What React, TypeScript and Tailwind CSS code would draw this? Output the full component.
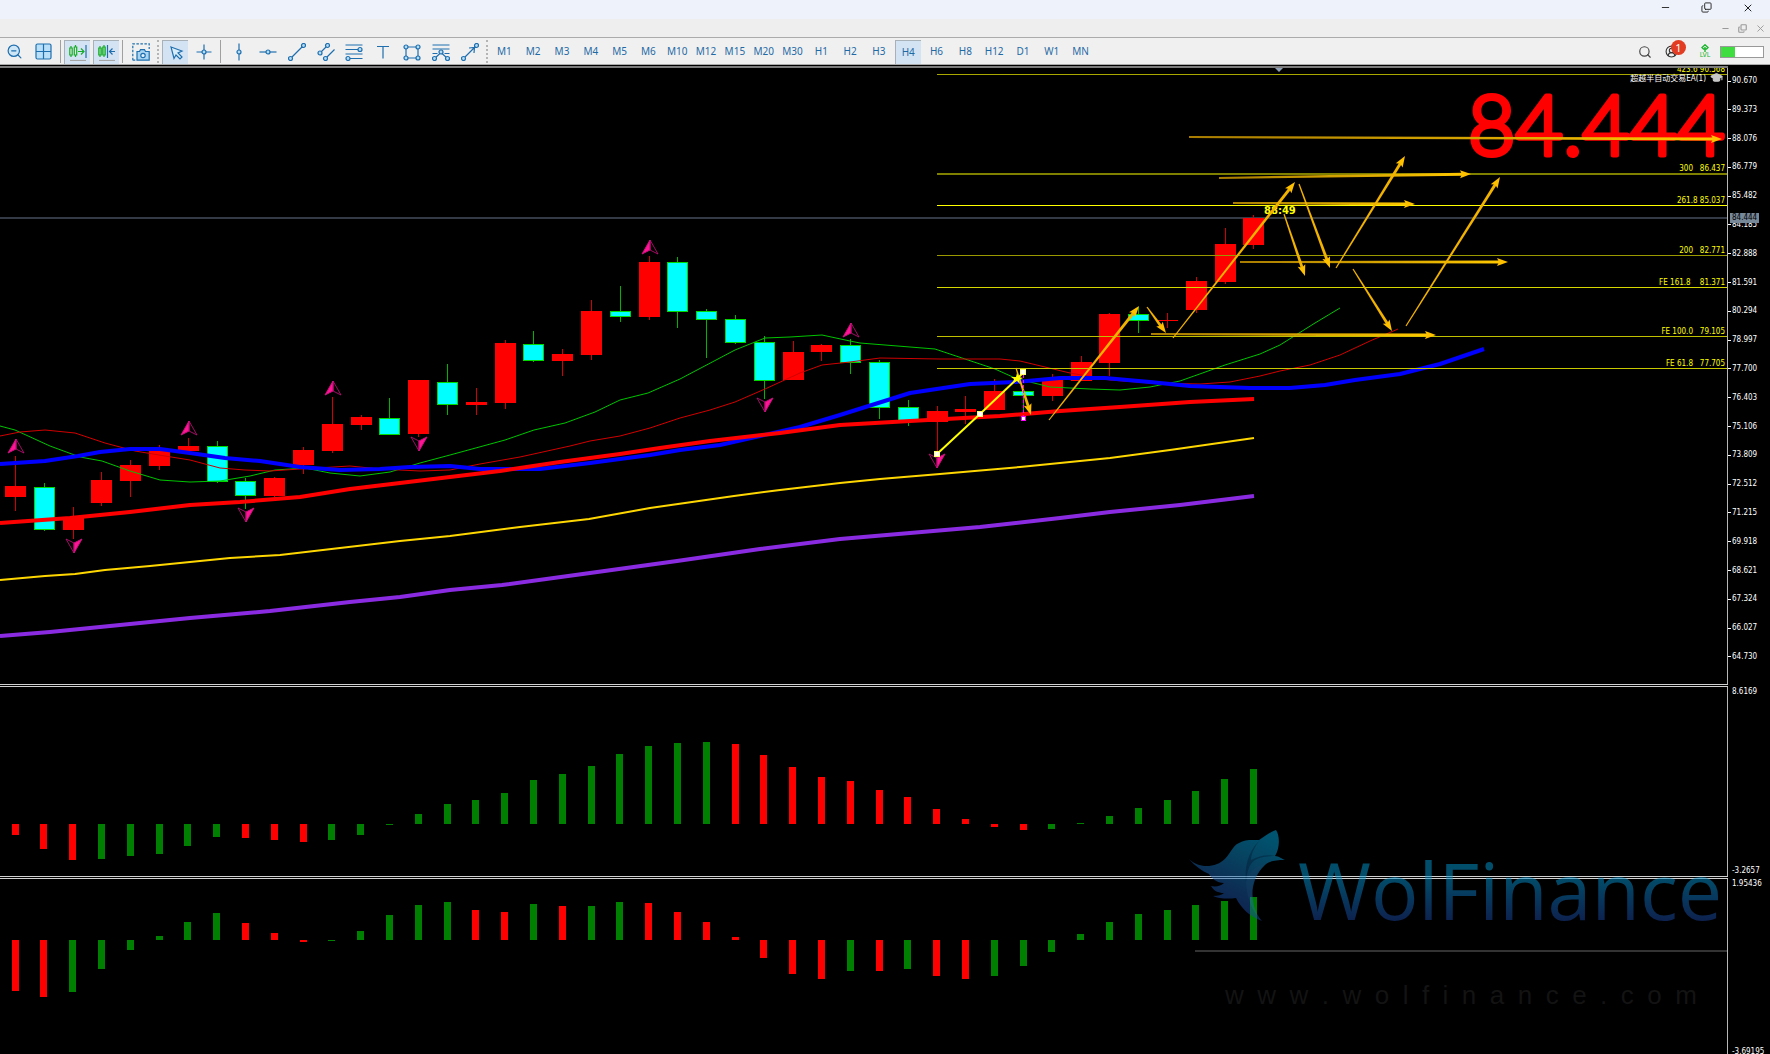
import React from 'react'
import { ZoomOut, Search, Minus, X, Copy, CircleUserRound, GraduationCap } from 'lucide-react'

type Tone = 'r' | 'g';
// [tone, body top, body bottom, wick top, wick bottom]
type Candle = [Tone, number, number, number, number];
type Point = [number, number];

const STEP = 28.8;
const FIRST = 15.5;
const barX = (i: number) => FIRST + i * STEP;

const candles: Candle[] = [
  ['r', 486, 497, 456, 511],
  ['g', 487, 529, 483, 531],
  ['r', 517, 530, 507, 539],
  ['r', 480, 503, 472, 506],
  ['r', 465, 481, 460, 497],
  ['r', 450, 466, 445, 470],
  ['r', 446, 451, 438, 451],
  ['g', 446, 481, 441, 483],
  ['g', 481, 495, 478, 509],
  ['r', 478, 496, 477, 497],
  ['r', 450, 465, 447, 474],
  ['r', 424, 451, 397, 453],
  ['r', 417, 425, 415, 430],
  ['g', 418, 434, 398, 435],
  ['r', 380, 434, 380, 437],
  ['g', 382, 404, 364, 415],
  ['r', 402, 405, 388, 415],
  ['r', 343, 403, 340, 409],
  ['g', 344, 360, 331, 362],
  ['r', 354, 361, 349, 376],
  ['r', 311, 355, 300, 360],
  ['g', 311, 316, 286, 322],
  ['r', 262, 317, 256, 320],
  ['g', 262, 311, 257, 328],
  ['g', 311, 319, 309, 358],
  ['g', 319, 342, 315, 344],
  ['g', 342, 380, 336, 399],
  ['r', 352, 380, 341, 380],
  ['r', 345, 352, 344, 361],
  ['g', 345, 362, 339, 374],
  ['g', 362, 407, 360, 419],
  ['g', 407, 420, 400, 426],
  ['r', 411, 422, 406, 452],
  ['r', 409, 412, 396, 424],
  ['r', 391, 410, 379, 410],
  ['g', 391, 395, 391, 417],
  ['r', 380, 396, 374, 401],
  ['r', 362, 381, 356, 381],
  ['r', 314, 363, 313, 376],
  ['g', 314, 320, 307, 333],
  ['r', 320, 321, 313, 328],
  ['r', 281, 310, 277, 313],
  ['r', 244, 282, 228, 284],
  ['r', 218, 245, 215, 249],
];

const macd: [Tone, number][] = [
  ['r', -11], ['r', -25], ['r', -36], ['g', -35], ['g', -32], ['g', -30], ['g', -22], ['g', -13],
  ['r', -14], ['r', -16], ['r', -18], ['g', -16], ['g', -11], ['g', -1], ['g', 10], ['g', 20],
  ['g', 24], ['g', 31], ['g', 44], ['g', 50], ['g', 58], ['g', 70], ['g', 78], ['g', 81],
  ['g', 82], ['r', 80], ['r', 69], ['r', 57], ['r', 47], ['r', 43], ['r', 34], ['r', 27],
  ['r', 15], ['r', 5], ['r', -3], ['r', -6], ['g', -5], ['g', 1], ['g', 8], ['g', 16],
  ['g', 24], ['g', 33], ['g', 45], ['g', 55],
];

const accel: [Tone, number][] = [
  ['r', -51], ['r', -57], ['g', -52], ['g', -29], ['g', -10], ['g', 4], ['g', 18], ['g', 27],
  ['r', 17], ['r', 7], ['r', -2], ['g', -1], ['g', 9], ['g', 25], ['g', 35], ['g', 38],
  ['r', 30], ['r', 28], ['g', 36], ['r', 34], ['g', 34], ['g', 38], ['r', 37], ['r', 28],
  ['r', 18], ['r', 3], ['r', -18], ['r', -34], ['r', -39], ['g', -31], ['r', -31], ['g', -29],
  ['r', -36], ['r', -39], ['g', -36], ['g', -26], ['g', -12], ['g', 6], ['g', 18], ['g', 26],
  ['g', 30], ['g', 35], ['g', 39], ['g', 43],
];

const averages = [
  {
    color: '#00c400', width: 1,
    points: '0,426 15,430 50,446 80,457 102,461 130,471 160,480 190,482 220,481 250,476 275,470 305,468 330,473 360,476 390,472 420,463 450,455 505,440 534,430 565,423 595,412 620,400 648,393 680,379 735,350 765,338 790,337 822,335 850,341 860,343 935,349 965,359 995,369 1015,378 1030,382 1050,387 1090,389 1120,390 1150,387 1180,381 1225,365 1260,354 1280,345 1315,323 1340,308',
  },
  {
    color: '#d00000', width: 1,
    points: '0,436 20,432 45,430 75,433 105,443 135,451 165,456 190,460 220,468 245,470 270,471 300,469 350,466 380,469 420,471 450,470 480,464 520,457 570,446 590,441 620,436 650,428 680,418 710,410 735,402 765,389 800,373 822,365 850,362 880,358 940,359 1000,359 1020,361 1070,373 1110,380 1150,383 1200,384 1230,382 1260,376 1280,371 1310,365 1340,355 1370,341 1398,329',
  },
  {
    color: '#0000ff', width: 4,
    points: '0,464 45,461 78,456 100,452 130,449 160,449 190,453 225,458 260,461 300,467 340,470 380,469 410,467 450,466 480,469 540,469 590,463 650,455 680,450 720,445 760,436 800,427 840,415 875,404 910,393 970,384 1015,382 1060,378 1105,378 1150,382 1190,386 1250,388 1290,388 1325,385 1355,380 1400,374 1440,364 1484,349',
  },
  {
    color: '#ff0000', width: 4,
    points: '0,523 70,518 130,512 190,505 240,502 300,497 350,489 400,483 450,477 500,471 560,462 620,454 660,448 710,441 780,433 840,425 910,421 1000,416 1060,411 1120,407 1190,402 1254,399',
  },
  {
    color: '#ffd700', width: 2,
    points: '0,580 45,576 75,574 105,570 150,566 230,558 280,555 340,548 400,541 450,536 520,527 589,519 650,508 734,496 780,490 840,483 880,479 940,474 1020,467 1080,461 1110,458 1170,450 1254,438',
  },
  {
    color: '#8a2be2', width: 4,
    points: '0,636 50,632 130,624 190,618 270,611 350,602 400,597 450,590 502,585 590,573 677,561 760,549 840,539 910,533 980,527 1060,518 1110,512 1180,505 1254,496',
  },
];

const fibs = [
  { y: 74, text: '423.6 90.568', color: '#a8a800', h: 1 },
  { y: 173, text: '300   86.437', color: '#808000', h: 2 },
  { y: 205, text: '261.8 85.037', color: '#ffff00', h: 1 },
  { y: 255, text: '200   82.771', color: '#9a9a00', h: 1 },
  { y: 287, text: 'FE 161.8    81.371', color: '#d6d600', h: 1 },
  { y: 336, text: 'FE 100.0   79.105', color: '#c0c000', h: 1 },
  { y: 368, text: 'FE 61.8   77.705', color: '#c8c800', h: 1 },
];

const arrows: [Point, Point][] = [
  [[1189, 137], [1722, 139]],
  [[1219, 178], [1471, 174]],
  [[1233, 203], [1415, 204]],
  [[1240, 262], [1508, 262]],
  [[1151, 334], [1436, 335]],
  [[1173, 338], [1295, 182]],
  [[1299, 184], [1330, 268]],
  [[1284, 214], [1305, 276]],
  [[1336, 268], [1405, 156]],
  [[1353, 269], [1392, 331]],
  [[1406, 326], [1500, 177]],
  [[1049, 420], [1139, 306]],
  [[1147, 307], [1166, 333]],
  [[1016, 368], [1031, 415]],
];

const fractalsUp: Point[] = [[16, 439], [189, 421], [333, 381], [650, 240], [851, 323]];
const fractalsDown: Point[] = [[74, 553], [246, 522], [419, 451], [765, 412], [937, 468]];

const prices = [
  '90.670', '89.373', '88.076', '86.779', '85.482', '84.185', '82.888', '81.591', '80.294', '78.997', '77.700',
  '76.403', '75.106', '73.809', '72.512', '71.215', '69.918', '68.621', '67.324', '66.027', '64.730',
];

const timeframes = [
  'M1', 'M2', 'M3', 'M4', 'M5', 'M6', 'M10', 'M12', 'M15', 'M20', 'M30',
  'H1', 'H2', 'H3', 'H4', 'H6', 'H8', 'H12', 'D1', 'W1', 'MN',
];

const BLUE = '#1f6fae';

const Dot = ({ x, y }: { x: number; y: number }) => (
  <circle cx={x} cy={y} r={2} fill="#b5dcf5" stroke={BLUE} />
);

const Glyph = ({ children }: { children: React.ReactNode }) => (
  <svg className="size-[18px] shrink-0" viewBox="0 0 18 18" fill="none" stroke={BLUE} strokeWidth={1.2}>
    {children}
  </svg>
);

const drawTools = [
  { name: 'Vertical line', icon: <><path d="M9 .5v17" /><Dot x={9} y={9} /></> },
  { name: 'Horizontal line', icon: <><path d="M.5 9h17" /><Dot x={9} y={9} /></> },
  { name: 'Trendline', icon: <><path d="M2.5 15.5l13-13" /><Dot x={2.5} y={15.5} /><Dot x={15.5} y={2.5} /></> },
  {
    name: 'Channel',
    icon: <><path d="M3 10l7.500-7.500M8.500 15.500l9-9" /><Dot x={3} y={10} /><Dot x={10.5} y={2.5} /><Dot x={8.5} y={15.5} /></>,
  },
  {
    name: 'Fibonacci retracement',
    icon: <><path d="M.5 2h17M.5 6.500h13M.5 11h17M4 15.500h13.500" /><Dot x={15} y={6.5} /><Dot x={3} y={15.5} /></>,
  },
  { name: 'Text', icon: <path d="M3 3.500h12M9 3.500v12" /> },
  {
    name: 'Rectangle',
    icon: <><path d="M3 4h12v11H3z" /><Dot x={3} y={4} /><Dot x={15} y={4} /><Dot x={3} y={15} /><Dot x={15} y={15} /></>,
  },
  {
    name: 'Fibonacci expansion',
    icon: (
      <>
        <path d="M.5 2h17M.5 6h17M.5 10.500h5M12.500 10.500h5M2.500 15.500L9 9.500l6.500 6" />
        <Dot x={2.5} y={15.5} /><Dot x={9} y={9} /><Dot x={15.5} y={15.5} />
      </>
    ),
  },
  {
    name: 'Arrow line',
    icon: <><path d="M2.500 15.500l13-13M8 5l5.500-.5L13 10" /><Dot x={2.5} y={15.5} /><Dot x={15.5} y={2.5} /></>,
  },
];

const iconBtn = 'flex h-6 w-[26px] shrink-0 items-center justify-center';
const pressed = 'bg-[#d3e3f3] border-t border-l border-[#a8b0b8]';

const Sep = () => <span className="h-[23px] w-px shrink-0 bg-[#a0a0a0]" />;
const Grip = () => <span className="h-[23px] shrink-0 border-l-2 border-dotted border-[#b4b4b4]" />;

const TitleBars = () => (
  <header>
    <div className="flex h-[19px] items-start justify-end gap-[30px] bg-[#edf2fb] pr-4 pt-[2px] text-[#222]">
      <button aria-label="Minimize"><Minus size={11} strokeWidth={2} /></button>
      <button aria-label="Restore"><Copy className="-scale-x-100 rotate-180" size={11} strokeWidth={2} /></button>
      <button aria-label="Close"><X size={12} strokeWidth={2} /></button>
    </div>
    <div className="flex h-[18px] items-center justify-end gap-2 bg-[#eeeeee] pr-1 text-[#999]">
      <button aria-label="Minimize chart"><Minus size={9} strokeWidth={3} /></button>
      <button aria-label="Restore chart"><Copy className="-scale-x-100 rotate-180" size={9} strokeWidth={3} /></button>
      <button aria-label="Close chart"><X size={11} strokeWidth={2} /></button>
    </div>
  </header>
);

const Toolbar = () => (
  <nav className="flex h-[28px] items-center border-y border-[#ababab] bg-[#f0f0f0] pt-px">
    <button aria-label="Zoom out" className="flex h-6 w-7 shrink-0 items-center justify-center">
      <ZoomOut size={17} color={BLUE} fill="#cfe6f6" strokeWidth={1.7} />
    </button>
    <button aria-label="Tile windows" className="flex h-6 w-8 shrink-0 items-center justify-center">
      <Glyph>
        <rect x={1} y={1} width={15} height={15} rx={1.5} fill="#b9e0f8" />
        <path d="M8.500 1v15M1 8.500h15" />
      </Glyph>
    </button>
    <Sep />
    <button aria-label="Auto scroll" className={`ml-[3px] ${iconBtn} ${pressed}`}>
      <Glyph>
        <g stroke="#19ab2c">
          <path d="M2 3v11M6.500 2v12M9 8.500h6M12 5.500l3 3-3 3" />
          <path d="M.8 5h2.400v7H.8zM5.300 4h2.400v8H5.300z" fill="#d8f5d8" />
        </g>
        <path d="M17 2v13" />
        <path d="M1 17.500h16" stroke="#a5a5a5" />
      </Glyph>
    </button>
    <button aria-label="Chart shift" className={`mx-[3px] ${iconBtn} ${pressed}`}>
      <Glyph>
        <g stroke="#19ab2c">
          <path d="M2 3v11M6 2v12" />
          <path d="M.8 5h2.400v7H.8zM4.800 4h2.400v8H4.800z" fill="#8fe09a" />
        </g>
        <path d="M9.500 2v13M17 8.500h-5M14.500 5.500l-3 3 3 3" />
        <path d="M1 17.500h16" stroke="#a5a5a5" />
      </Glyph>
    </button>
    <Sep />
    <button aria-label="Screenshot" className={`ml-[5px] mr-[3px] ${iconBtn}`}>
      <Glyph>
        <path d="M.8 17.200V.8h16.400V6M.8 17.200H4" strokeDasharray="2.500 1.500" />
        <path d="M5 8.500h2.500l1-1.800h4l1 1.800h3.700v8.700H5z" fill="#a9d5f3" />
        <circle cx={11} cy={12.5} r={2.2} fill="#e6f3fb" />
      </Glyph>
    </button>
    <Grip />
    <button aria-label="Cursor" className={`ml-[3px] ${iconBtn} ${pressed}`}>
      <Glyph><path d="M4 4l11 4-4 2 4 4-2 2-4-4-2 3.500z" fill="#d8ecf9" /></Glyph>
    </button>
    <button aria-label="Crosshair" className={`mx-[3px] ${iconBtn}`}>
      <Glyph><path d="M9 1.500v15M1.500 9h15" /><Dot x={9} y={9} /></Glyph>
    </button>
    <Sep />
    <div className="ml-1 grid w-[259px] shrink-0 grid-cols-9 justify-items-center">
      {drawTools.map((tool) => (
        <button key={tool.name} aria-label={tool.name} className={iconBtn}>
          <Glyph>{tool.icon}</Glyph>
        </button>
      ))}
    </div>
    <span className="w-[2px]" />
    <Grip />
    <div className="ml-[2px] grid w-[605px] shrink-0 grid-cols-[repeat(21,minmax(0,1fr))] justify-items-center font-['Noto_Sans',sans-serif] text-[10px] text-[#1f6aa5]">
      {timeframes.map((tf) => (
        <button key={tf} className={tf === 'H4' ? `${iconBtn} ${pressed}` : iconBtn}>{tf}</button>
      ))}
    </div>
    <div className="ml-auto flex items-center pr-[6px]">
      <button aria-label="Search"><Search size={14} color="#444" strokeWidth={2} /></button>
      <button aria-label="Account" className="relative ml-[13px] mr-4 w-4">
        <CircleUserRound size={13} color="#333" />
        <span className="absolute -top-[5px] left-[6px] flex size-[15px] items-center justify-center rounded-full bg-[#e23c22] text-[11px] leading-none text-white">1</span>
      </button>
      <div className="flex w-4 flex-col items-center text-[#1cb52f]">
        <svg className="size-2" viewBox="0 0 8 8" fill="none" stroke="currentColor" strokeWidth={1.4}>
          <path d="M4 .8l3 2.700-1.500 1.500h-3L1 3.500zM4 3v5" />
        </svg>
        <span className="font-['DejaVu_Sans_Condensed','DejaVu_Sans',sans-serif] text-[7px] leading-[7px]">LVL</span>
      </div>
      <div className="ml-[7px] h-3 w-11 border border-[#999] bg-white">
        <div className="h-full w-[14px] bg-[#3fdd3f]" />
      </div>
    </div>
  </nav>
);

// thin at the tail, thicker toward the head
const Arrow = ({ from, to }: { from: Point; to: Point }) => {
  const [x1, y1] = from;
  const [x2, y2] = to;
  const len = Math.hypot(x2 - x1, y2 - y1);
  const angle = (Math.atan2(y2 - y1, x2 - x1) * 180) / Math.PI;
  const flat = Math.abs(angle) < 2;
  const t = flat ? 1 : 0.6;
  return (
    <g transform={`translate(${x1} ${y1}) rotate(${angle})`}>
      <path d={`M0 ${-t}L${len - 8} -1.500V1.500L0 ${t}z`} fill={flat ? 'url(#shaft)' : '#f2b200'} />
      <path d={`M${len} 0l-11 -4l2 4l-2 4z`} fill="#ffc000" />
    </g>
  );
};

const Histogram = ({ data, zero }: { data: [Tone, number][]; zero: number }) => (
  <g shapeRendering="crispEdges">
    {data.map(([tone, v], i) => (
      <rect
        key={i}
        x={Math.floor(barX(i) - 3.5)}
        y={v > 0 ? zero - v : zero}
        width={7}
        height={Math.abs(v)}
        fill={tone === 'r' ? '#ff0000' : '#008000'}
      />
    ))}
  </g>
);

const PriceChart = () => (
  <svg className="h-[616px] w-full min-w-0" viewBox="0 68 1727 616" preserveAspectRatio="xMaxYMin slice">
    <defs>
      <linearGradient id="shaft" x1="0" x2="1">
        <stop offset="0" stopColor="#a87c00" />
        <stop offset="1" stopColor="#ffc800" />
      </linearGradient>
    </defs>
    <rect x={0} y={217} width={1727} height={2} fill="#343a46" />
    <g shapeRendering="crispEdges">
      {candles.map(([tone, top, bottom, high, low], i) => {
        const x = Math.floor(barX(i) - 10);
        const up = tone === 'r';
        return (
          <g key={i}>
            <rect x={x + 10} y={high} width={1} height={low - high} fill={up ? '#d40000' : '#00b400'} />
            {up ? (
              <rect x={x} y={top} width={21} height={bottom - top} fill="#ff0000" />
            ) : (
              <rect x={x + 0.5} y={top + 0.5} width={20} height={bottom - top} fill="#00ffff" stroke="#00d800" />
            )}
          </g>
        );
      })}
    </g>
    {averages.map((line) => (
      <polyline key={line.color} points={line.points} fill="none" stroke={line.color} strokeWidth={line.width} strokeLinejoin="round" />
    ))}
    {fractalsUp.map(([x, y]) => (
      <g key={x} transform={`translate(${x} ${y})`} stroke="#c8107c">
        <path d="M0 0L-8 14L0 10z" fill="#ff1493" />
        <path d="M0 0L8 14L0 10z" fill="none" strokeWidth={0.8} />
      </g>
    ))}
    {fractalsDown.map(([x, y]) => (
      <g key={x} transform={`translate(${x} ${y})`} stroke="#c8107c">
        <path d="M0 0L8 -14L0 -10z" fill="#ff1493" />
        <path d="M0 0L-8 -14L0 -10z" fill="none" strokeWidth={0.8} />
      </g>
    ))}
    <g className="font-['DejaVu_Sans_Condensed','DejaVu_Sans',sans-serif] text-[8px]" textAnchor="end">
      {fibs.map((fib) => (
        <g key={fib.text}>
          <rect x={937} y={fib.y} width={790} height={fib.h} fill={fib.color} />
          <text className="whitespace-pre" x={1725} y={fib.y - 2} fill="#ffff00">{fib.text}</text>
        </g>
      ))}
      <text className="font-['DejaVu_Sans_Condensed','Noto_Sans_CJK_SC',sans-serif]" x={1706} y={81} fill="#ffffff">超越半自动交易EA(1)</text>
    </g>
    <text
      className="font-[Lato,sans-serif] text-[82px] font-light"
      x={1725}
      y={155}
      textAnchor="end"
      fill="#ff0000"
      stroke="#ff0000"
      strokeWidth={5}
      strokeLinejoin="round"
    >
      84.444
    </text>
    <text className="font-['DejaVu_Sans',sans-serif] text-[10px] font-bold" x={1264} y={214} fill="#ffff00">88:49</text>
    <path d="M1274 67h10l-5 5z" fill="#8fa0b4" />
    {arrows.map(([from, to], i) => <Arrow key={i} from={from} to={to} />)}
    <path d="M1023.500 375v42" stroke="#ff00ff" strokeDasharray="3 2" />
    <path d="M937 454L980 414L1023 373" fill="none" stroke="#ffff00" strokeWidth={2} />
    <path d="M1017 373l2 4 4 1-4 2 1 4-3-3-4 2 1-4-3-2 5 0z" fill="#ffff00" />
    {[[937, 454], [980, 414], [1023, 372]].map(([x, y]) => (
      <rect key={x} x={x - 2.5} y={y - 2.5} width={5} height={5} fill="#ffffff" stroke="#ffff66" />
    ))}
    <rect x={1021.5} y={416.5} width={4} height={4} fill="#ffffff" stroke="#ff00ff" />
  </svg>
);

const AxisLabel = ({ children }: { children: string }) => (
  <div className="flex h-3 items-center gap-px">
    <span className="h-px w-[3px] bg-white" />
    <span className="whitespace-nowrap">{children}</span>
  </div>
);

const Divider = () => <div className="mr-[42px] h-[3px] border-y border-[#d0d0d0] bg-black" />;

const axis = "border-l border-[#b8b8b8] font-['DejaVu_Sans_Condensed','DejaVu_Sans',sans-serif] text-[8px] text-white";

const Watermark = () => (
  <div className="pointer-events-none absolute right-[43px] top-[760px] w-[540px]">
    <svg className="h-[110px] w-full opacity-50" viewBox="0 0 540 110">
      <defs>
        <linearGradient id="brand" gradientUnits="userSpaceOnUse" x1="0" y1="5" x2="0" y2="95">
          <stop offset="0" stopColor="#00a8e0" />
          <stop offset="0.5" stopColor="#0497d2" />
          <stop offset="1" stopColor="#1c3f9a" />
        </linearGradient>
        <linearGradient id="wolf" gradientUnits="userSpaceOnUse" x1="80" y1="5" x2="40" y2="90">
          <stop offset="0" stopColor="#00a8e0" />
          <stop offset="0.3" stopColor="#0c8ac4" />
          <stop offset="0.7" stopColor="#1a5aa8" />
          <stop offset="1" stopColor="#1c3f9a" />
        </linearGradient>
      </defs>
      <path
        fill="url(#wolf)"
        d="M2 31C9 38 20 40 30 36C42 32 44 18 52 15C58 11 66 12 72 12C78 8 83 4 89 2C93 8 93 20 88 28C92 28 95 31 98 32C88 32 82 33 78 37C68 46 64 60 66 72C67 82 70 88 75 93C62 88 54 80 49 70C42 71 32 71 26 68C31 68 35 67 37 65C31 65 27 63 24 58C29 59 34 58 37 55C30 55 24 50 22 46C15 43 8 38 2 31z"
      />
      <path d="M73 12C62 22 57 38 59 54C60 44 62 36 68 32C74 29 82 28 88 28C80 26 72 28 64 32C64 26 68 18 73 12z" fill="#04305c" opacity={0.4} />
      <path d="M59 54C60 72 66 84 74 92C68 84 65 74 65 62C66 52 70 42 78 36C68 38 62 44 59 54z" fill="#2f7fc8" opacity={0.4} />
      <text className="font-['Open_Sans',sans-serif] text-[79px] font-medium" x={111} y={92} fill="url(#brand)">WolFinance</text>
    </svg>
    <div className="ml-2 mt-[12px] h-[2px] bg-[#333333]" />
    <div aria-label="www.wolfinance.com" className="ml-[38px] mr-[30px] mt-[27px] flex justify-between font-['Liberation_Sans',sans-serif] text-[26px] leading-8 text-[#131313]">
      {'www.wolfinance.com'.split('').map((ch, i) => <span key={i}>{ch}</span>)}
    </div>
  </div>
);

const App = () => {
  return (
    <div className="min-h-screen overflow-hidden bg-black">
      <TitleBars />
      <Toolbar />
      <div className="mr-[42px] mt-px h-[2px] bg-[#7c7c7c]" />
      <main className="relative">
        <section className="grid grid-cols-[minmax(0,1fr)_43px]">
          <PriceChart />
          <div className={`relative flex flex-col justify-between pb-[21px] pt-[7px] leading-3 ${axis}`}>
            {prices.map((p) => <AxisLabel key={p}>{p}</AxisLabel>)}
            <span className="absolute left-[2px] top-[145px] h-[10px] bg-[#778899] px-[2px] leading-[10px] text-black">84.444</span>
          </div>
        </section>
        <GraduationCap className="absolute right-[47px] top-[3px]" size={13} color="#c8c8c8" fill="#c8c8c8" />
        <Divider />
        <section className="grid grid-cols-[minmax(0,1fr)_43px]">
          <svg className="h-[189px] w-full" viewBox="0 687 1727 189" preserveAspectRatio="xMaxYMin slice">
            <Histogram data={macd} zero={824} />
          </svg>
          <div className={`flex flex-col justify-between pl-1 leading-[10px] ${axis}`}>
            <span>8.6169</span>
            <span>-3.2657</span>
          </div>
        </section>
        <Divider />
        <section className="grid grid-cols-[minmax(0,1fr)_43px]">
          <svg className="h-[175px] w-full" viewBox="0 879 1727 175" preserveAspectRatio="xMaxYMin slice">
            <Histogram data={accel} zero={940} />
          </svg>
          <div className={`flex h-[175px] flex-col justify-between overflow-hidden pl-1 leading-[10px] ${axis}`}>
            <span>1.95436</span>
            <span className="-mb-[3px]">-3.69195</span>
          </div>
        </section>
        <Watermark />
      </main>
    </div>
  );
};

export default App;
